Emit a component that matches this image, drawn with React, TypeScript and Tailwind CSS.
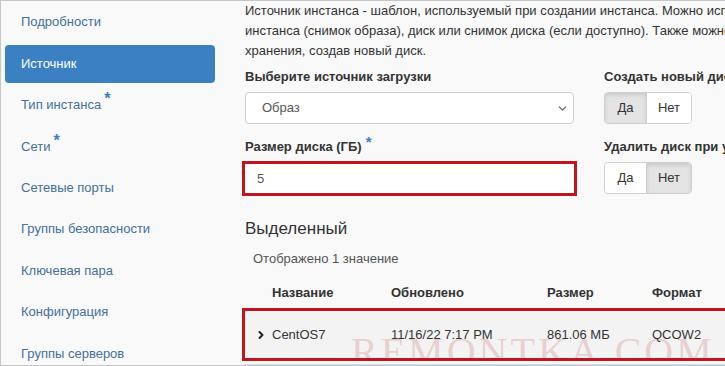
import React from 'react';
import { ChevronDown, ChevronRight } from 'lucide-react';

const navItems = [
  { label: 'Подробности' },
  { label: 'Источник', active: true },
  { label: 'Тип инстанса', required: true },
  { label: 'Сети', required: true },
  { label: 'Сетевые порты' },
  { label: 'Группы безопасности' },
  { label: 'Ключевая пара' },
  { label: 'Конфигурация' },
  { label: 'Группы серверов' },
];

function Toggle({ active }: { active: 'yes' | 'no' }) {
  const on = 'bg-[#e4e4e4] shadow-[inset_0_2px_4px_rgba(0,0,0,0.12)]';
  const off = 'bg-white';
  return (
    <div className="flex h-[32px] w-[88px] rounded-[4px] border border-[#cfcfcf] overflow-hidden text-[#333]">
      <div className={`w-[42px] flex items-center justify-center border-r border-[#cfcfcf] ${active === 'yes' ? on : off}`}>Да</div>
      <div className={`flex-1 flex items-center justify-center ${active === 'no' ? on : off}`}>Нет</div>
    </div>
  );
}

export default function App() {
  return (
    <div className="w-[725px] h-[366px] overflow-hidden flex bg-[#f9f9f9] border-t border-l border-b border-[#c6c6c6] font-['Liberation_Sans',Arial,sans-serif] text-[13px] text-[#333]">
      {/* side nav */}
      <nav className="w-[244px] shrink-0 pt-[0.5px]">
        {navItems.map((item) => (
          <div key={item.label} className="h-[41.4px] flex items-center">
            {item.active ? (
              <div className="ml-[4px] w-[210px] h-[38px] rounded-[4px] bg-[#3b80c3] text-white flex items-center pl-[16px]">
                {item.label}
              </div>
            ) : (
              <div className="pl-[20px] text-[#44709a] flex items-start">
                {item.label}
                {item.required && <span className="ml-[3px] text-[#3b80c3] text-[16px] font-bold leading-none -mt-[4px]">*</span>}
              </div>
            )}
          </div>
        ))}
      </nav>

      {/* main */}
      <main className="w-[640px] shrink-0 leading-[20px]">
        <div className="whitespace-nowrap">
          <div>Источник инстанса - шаблон, используемый при создании инстанса. Можно использовать образ, снимок</div>
          <div>инстанса (снимок образа), диск или снимок диска (если доступно). Также можно использовать постоянное хранилище</div>
          <div>хранения, создав новый диск.</div>
        </div>

        <div className="flex gap-[30px] mt-[6px]">
          <div className="w-[329px] shrink-0">
            <div className="font-bold whitespace-nowrap">Выберите источник загрузки</div>
            <div className="mt-[5px] h-[32px] bg-white border border-[#cfcfcf] rounded-[4px] flex items-center justify-between pl-[16px] pr-[4px] text-[#555]">
              <span>Образ</span>
              <ChevronDown size={13} strokeWidth={2.5} className="text-[#666]" />
            </div>

            <div className="mt-[13px] font-bold whitespace-nowrap flex items-start">
              Размер диска (ГБ)
              <span className="ml-[4px] text-[#3b80c3] text-[15px] font-bold leading-none -mt-[3px]">*</span>
            </div>
            <div className="mt-[4px] -ml-[3px] w-[335px] h-[35px] border-[3px] border-[#c0141e] bg-white flex items-center pl-[12px] text-[#555]">
              5
            </div>
          </div>

          <div className="shrink-0">
            <div className="font-bold whitespace-nowrap">Создать новый диск</div>
            <div className="mt-[5px]">
              <Toggle active="yes" />
            </div>
            <div className="mt-[13px] font-bold whitespace-nowrap">Удалить диск при удалении инстанса</div>
            <div className="mt-[5px]">
              <Toggle active="no" />
            </div>
          </div>
        </div>

        <div className="mt-[22px] text-[17px] leading-[22px] text-[#333]">Выделенный</div>
        <div className="mt-[9px] pl-[8px] text-[13px] leading-[20px] text-[#555]">Отображено 1 значение</div>

        <div className="mt-[14px] flex font-bold whitespace-nowrap h-[20px] items-center">
          <div className="w-[27px]" />
          <div className="w-[119px]">Название</div>
          <div className="w-[156px]">Обновлено</div>
          <div className="w-[105px]">Размер</div>
          <div>Формат</div>
        </div>

        <div className="mt-[5px] -ml-[3px] w-[700px] h-[53px] border-[3px] border-[#c0141e] bg-[#f3f3f3] relative overflow-hidden flex items-center whitespace-nowrap">
          <div className="w-[27px] pl-[10px] flex items-center">
            <ChevronRight size={12} strokeWidth={4} className="text-[#222]" />
          </div>
          <div className="w-[119px]">CentOS7</div>
          <div className="w-[156px]">11/16/22 7:17 PM</div>
          <div className="w-[105px]">861.06 МБ</div>
          <div>QCOW2</div>
          <div className="absolute left-[106px] top-[21px] font-['Liberation_Serif','Times_New_Roman',serif] text-[40px] leading-none tracking-[3px] text-[rgba(205,120,120,0.3)] pointer-events-none">
            REMONTKA.COM
          </div>
        </div>
        <div className="mt-[3px] border-b border-[#dcdcdc]" />
      </main>
    </div>
  );
}
